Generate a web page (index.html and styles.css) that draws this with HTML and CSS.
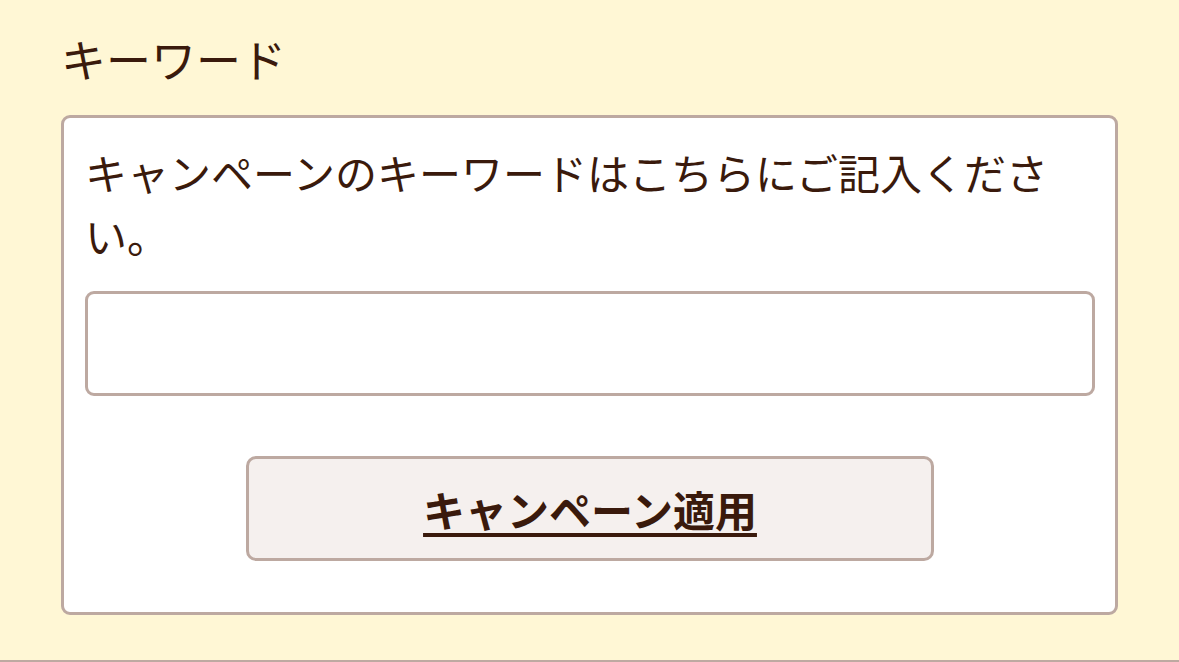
FILE: index.html
```html
<!DOCTYPE html>
<html lang="ja">
<head>
  <meta charset="UTF-8" />
  <meta name="viewport" content="width=device-width, initial-scale=1.0"/>
  <title>キーワード</title>
  <link rel="stylesheet" href="styles.css">
</head>
<body>

  <!-- Keyword section -->
  <section class="keyword-section">
    <h2 class="keyword-title">キーワード</h2>

    <div class="keyword-box">
      <p class="keyword-note">キャンペーンのキーワードはこちらにご記入ください。</p>
      <input type="text" class="keyword-input" id="keyword">
      <div class="btn-wrap">
        <button class="btn" type="button"><span>キャンペーン適用</span></button>
      </div>
    </div>
  </section>

</body>
</html>
```

FILE: styles.css
```css
* {
  box-sizing: border-box;
}

body {
  margin: 0;
  padding: 0;
  font-family: "Noto Sans CJK JP", "Noto Sans", sans-serif;
  background: #fff7d5;
  color: #3a1a0c;
}

.keyword-section {
  height: 662px;
  padding: 26px 61px 0;
  border-bottom: 2px solid #bda9a1;
}

.keyword-title {
  margin: 0 0 23px;
  font-size: 45px;
  font-weight: 400;
  line-height: 66px;
}

.keyword-box {
  background: #fff;
  border: 3px solid #bda9a1;
  border-radius: 9px;
  padding: 22px 20px 51px 21px;
}

.keyword-note {
  margin: 0 0 25px;
  font-size: 42px;
  line-height: 63px;
}

.keyword-input {
  display: block;
  width: 100%;
  height: 105px;
  border: 3px solid #bda9a1;
  border-radius: 9px;
  background: #fff;
  font-size: 42px;
  padding: 0 20px;
}

input:focus, button:focus {
  outline: none;
}

.btn-wrap {
  display: flex;
  justify-content: center;
  margin-top: 60px;
}

.btn {
  width: 688px;
  height: 105px;
  background: #f5f0ee;
  border: 3px solid #bda9a1;
  border-radius: 10px;
  color: #3a1a0c;
  font-family: inherit;
  font-size: 42px;
  font-weight: 700;
  cursor: pointer;
}

.btn span {
  text-decoration: underline;
  text-decoration-thickness: 4px;
  text-underline-offset: 6px;
}
```
